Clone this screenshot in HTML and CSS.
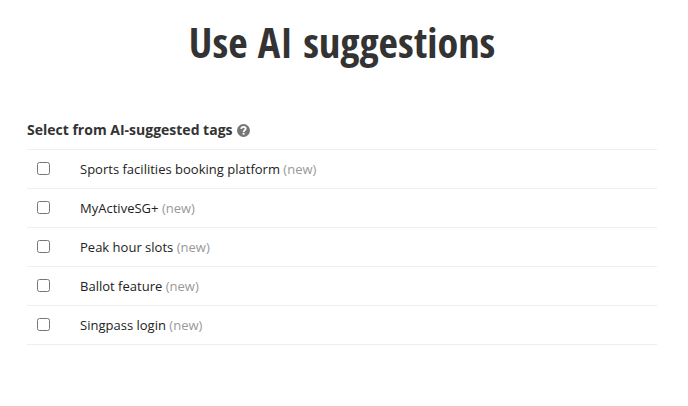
FILE: index.html
```html
<!DOCTYPE html>
<html lang="en">
<head>
<meta charset="utf-8">
<title>Use AI suggestions</title>
<link rel="stylesheet" href="styles.css">
</head>
<body>
<main class="panel">
  <h1 class="title"><span class="title-text">Use AI suggestions</span></h1>
  <div class="heading">
    <span>Select from AI-suggested tags</span>
    <svg class="help" viewBox="0 0 12 12" aria-hidden="true"><circle cx="6" cy="6" r="6" fill="#777"/><path d="M3.9 4.5C4.2 2.1 8 2.2 8 4.4C8 5.8 6.1 5.6 6.1 7.3" fill="none" stroke="#fff" stroke-width="1.7"/><path d="M5.2 8.1h1.8v1.7H5.2z" fill="#fff"/></svg>
  </div>
  <ul class="tags">
    <li class="row"><input class="check" type="checkbox" id="t1"><label for="t1">Sports facilities booking platform <span class="new">(new)</span></label></li>
    <li class="row"><input class="check" type="checkbox" id="t2"><label for="t2">MyActiveSG+ <span class="new">(new)</span></label></li>
    <li class="row"><input class="check" type="checkbox" id="t3"><label for="t3">Peak hour slots <span class="new">(new)</span></label></li>
    <li class="row"><input class="check" type="checkbox" id="t4"><label for="t4">Ballot feature <span class="new">(new)</span></label></li>
    <li class="row"><input class="check" type="checkbox" id="t5"><label for="t5">Singpass login <span class="new">(new)</span></label></li>
  </ul>
</main>
</body>
</html>
```
FILE: styles.css
```css
* { box-sizing: border-box; }
body { margin: 0; background: #fff; color: #333; font: 13px/20px "Open Sans", sans-serif; }
.panel { padding: 12px 31px 0 27px; }
.title { display: flex; justify-content: center; margin: 0 0 48px; height: 60px; font-family: "Open Sans Condensed", "Open Sans", sans-serif; font-size: 42px; line-height: 60px; font-weight: 700; font-stretch: 75%; white-space: nowrap; }
.heading { display: flex; align-items: center; gap: 4px; height: 20px; margin-bottom: 9px; font-size: 14px; font-weight: 700; }
.help { width: 13px; height: 13px; }
.tags { list-style: none; margin: 0; padding: 0; border-top: 1px solid #eee; color: #222; }
.row { display: flex; align-items: center; height: 39px; border-bottom: 1px solid #eee; letter-spacing: 0.01px; }
.check { width: 13px; height: 13px; margin: 0 30px 2px 10px; }
.new { color: #999; }
```
